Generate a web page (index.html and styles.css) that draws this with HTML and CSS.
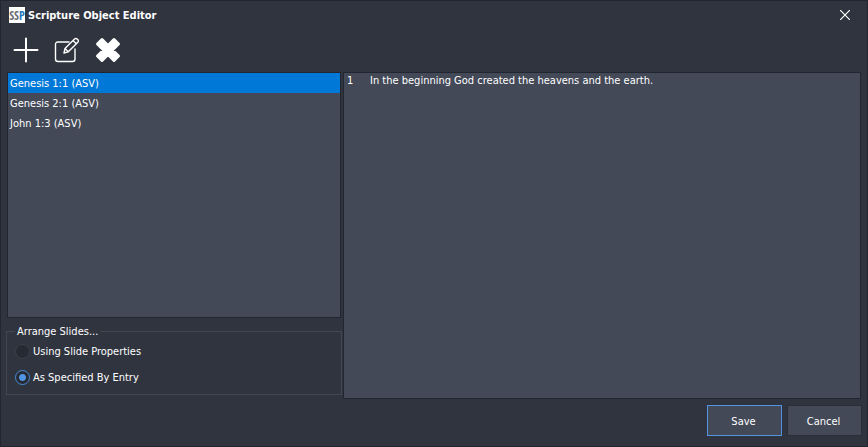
FILE: index.html
```
<!DOCTYPE html>
<html lang="en">
<head>
    <meta charset="UTF-8">
    <meta name="viewport" content="width=device-width, initial-scale=1.0">
    <title>Scripture Object Editor</title>
    <link rel="stylesheet" href="styles.css">
</head>
<body>
    <div class="window">
        <!-- Title bar -->
        <header class="title-bar">
            <svg class="app-icon" width="16" height="16" viewBox="0 0 16 16">
                <rect width="16" height="16" fill="#fff"/>
                <text x="8" y="13" text-anchor="middle">SS<tspan class="accent">P</tspan></text>
            </svg>
            <h1>Scripture Object Editor</h1>
            <button type="button" class="close-button" aria-label="Close">
                <svg width="10" height="10" viewBox="0 0 10 10"><path d="M0 0L10 10M10 0L0 10" stroke="#fff" stroke-width="1.2"/></svg>
            </button>
        </header>

        <!-- Toolbar -->
        <div class="toolbar">
            <button type="button" aria-label="Add">
                <svg width="26" height="26" viewBox="0 0 26 26"><path d="M13 1.500V24.500M1.500 13H24.500" stroke="#fff" stroke-width="2" stroke-linecap="round"/></svg>
            </button>
            <button type="button" aria-label="Edit">
                <svg width="26" height="26" viewBox="0 0 26 26" fill="none" stroke="#fff" stroke-width="1.400" stroke-linejoin="round" stroke-linecap="round">
                    <path d="M15 5H4Q1.500 5 1.500 7.500V22Q1.500 24.500 4 24.500H18.500Q21 24.500 21 22V12"/>
                    <path d="M10 16L11 11.500L20.500 2Q22 .8 23.500 2.200Q25 3.700 23.800 5.200L14.300 14.800ZM11 11.500L14.300 14.800M19 3.500L22.300 6.800"/>
                </svg>
            </button>
            <button type="button" aria-label="Delete">
                <svg width="26" height="26" viewBox="0 0 26 26"><path d="M7 2.500L13 8.500L19 2.500L23.500 7L17.500 13L23.500 19L19 23.500L13 17.500L7 23.500L2.500 19L8.500 13L2.500 7Z" fill="#fff" stroke="#fff" stroke-width="3" stroke-linejoin="round"/></svg>
            </button>
        </div>

        <main class="content">
            <div class="sidebar">
                <ul class="entry-list" role="listbox" aria-label="Entries">
                    <li class="selected" role="option" aria-selected="true">Genesis 1:1 (ASV)</li>
                    <li role="option" aria-selected="false">Genesis 2:1 (ASV)</li>
                    <li role="option" aria-selected="false">John 1:3 (ASV)</li>
                </ul>

                <fieldset class="arrange">
                    <legend>Arrange Slides...</legend>
                    <label><input type="radio" name="arrange"> Using Slide Properties</label>
                    <label><input type="radio" name="arrange" checked> As Specified By Entry</label>
                </fieldset>
            </div>

            <div class="preview">
                <div class="verse">
                    <span class="verse-number">1</span>
                    <span>In the beginning God created the heavens and the earth.</span>
                </div>
            </div>
        </main>

        <footer class="actions">
            <button type="button" class="default">Save</button>
            <button type="button">Cancel</button>
        </footer>
    </div>
</body>
</html>
```

FILE: styles.css
```
* {
    margin: 0;
    padding: 0;
    box-sizing: border-box;
}

body {
    font-family: Tahoma, "DejaVu Sans Condensed", "Noto Sans", sans-serif;
    font-size: 11px;
    line-height: 16px;
    color: #fff;
    background: #30343f;
}

button {
    font: inherit;
    color: inherit;
    border: none;
    background: none;
}

svg {
    display: block;
}

.window {
    display: flex;
    flex-direction: column;
    min-height: 100vh;
    border: 1px solid #222631;
    padding: 0 5px 10px;
}

.title-bar {
    display: flex;
    align-items: center;
    gap: 3px;
    height: 28px;
    padding-left: 3px;
}

.app-icon text {
    font: bold 12px "Open Sans Condensed", "Liberation Sans", sans-serif;
    fill: #6c6c72;
}

.app-icon .accent {
    fill: #2878b8;
}

.title-bar h1 {
    padding-top: 2px;
    font-size: 11px;
    font-weight: bold;
}

.close-button {
    margin-left: auto;
    padding: 8px 12px;
}

.toolbar {
    display: flex;
    gap: 15px;
    padding: 8px 7px 9px;
}

.content {
    display: flex;
    flex: 1;
    gap: 1px;
}

.sidebar {
    display: flex;
    flex-direction: column;
    gap: 5px;
    width: 336px;
    padding-bottom: 4px;
}

.entry-list {
    flex: 1;
    margin: 0 1px;
    list-style: none;
    background: #434957;
    border: 1px solid #222631;
}

.entry-list li {
    height: 20px;
    padding: 3px 2px 1px;
}

.entry-list .selected {
    background: #0078d7;
}

.arrange {
    height: 72px;
    padding: 0 8px;
    border: 1px solid #434752;
}

.arrange legend {
    padding: 1px 2px 0;
}

.arrange label {
    display: flex;
    align-items: center;
    gap: 3px;
    height: 26px;
    padding-bottom: 3px;
}

.arrange input {
    appearance: none;
    width: 15px;
    height: 15px;
    border: 1px solid #3c404b;
    border-radius: 50%;
    background: #262a33;
}

.arrange input:checked {
    border-color: #4a8cd8;
    background: radial-gradient(circle, #5294e2 3px, #262a33 4px);
}

.preview {
    flex: 1;
    background: #434957;
    border: 1px solid #222631;
    margin-right: 1px;
}

.verse {
    display: flex;
    padding: 0 3px;
}

.verse-number {
    width: 23px;
}

.actions {
    display: flex;
    justify-content: flex-end;
    gap: 5px;
    padding-top: 6px;
}

.actions button {
    width: 75px;
    height: 31px;
    padding: 2px 2px 0 0;
    background: #434957;
    border: 1px solid #2a2e39;
}

.actions .default {
    border-color: #5294e2;
}
```
